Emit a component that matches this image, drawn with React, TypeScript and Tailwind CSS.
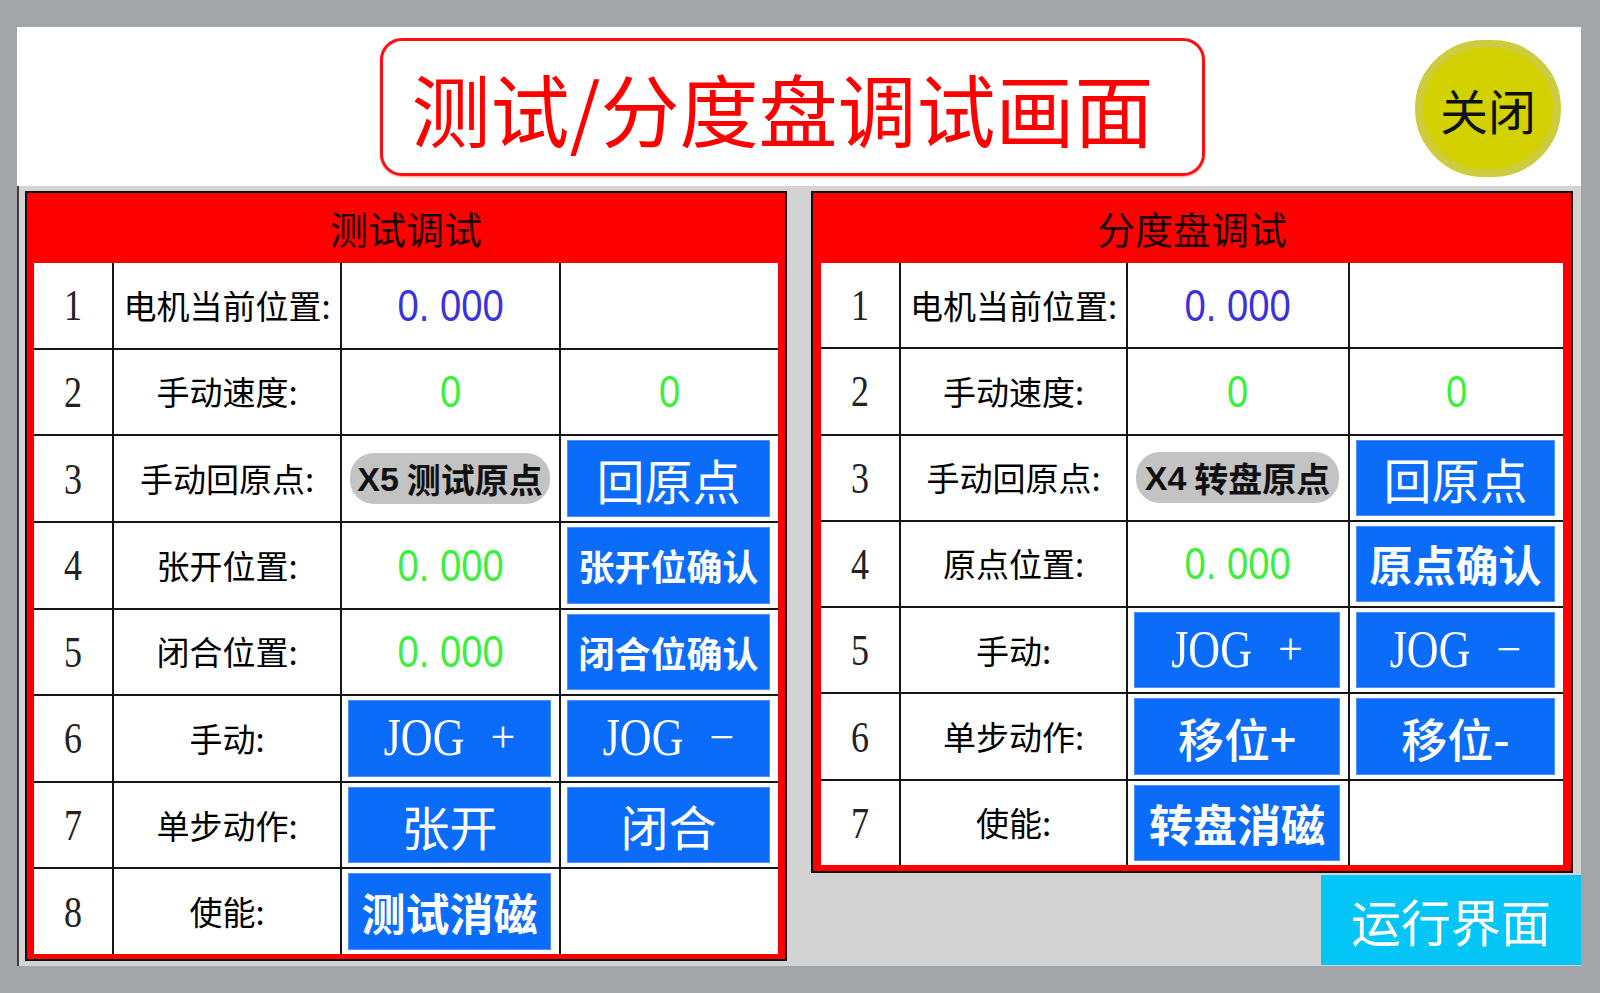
import React from "react";

const CJK = "font-['Noto_Sans_CJK_SC',sans-serif]";

function Num({ n }: { n: string }) {
  return (
    <div className="flex items-center justify-center bg-white">
      <span className="inline-block scale-y-[1.25] font-['Liberation_Serif','Noto_Sans_CJK_SC',serif] text-[36px] leading-none text-[#222]">
        {n}
      </span>
    </div>
  );
}

function Label({ t }: { t: string }) {
  return (
    <div className={`flex items-center justify-center bg-white ${CJK} text-[33px] leading-none text-black`}>
      {t}
    </div>
  );
}

function Val({ v, color }: { v: string; color: string }) {
  return (
    <div className="flex items-center justify-center bg-white">
      <span
        className={`inline-block scale-x-[0.85] whitespace-pre font-['Liberation_Sans',sans-serif] text-[45px] leading-none ${color}`}
      >
        {v}
      </span>
    </div>
  );
}

function Empty() {
  return <div className="bg-white" />;
}

function Btn({ children, cls }: { children: React.ReactNode; cls: string }) {
  return (
    <div className="flex bg-white pl-[6px] pr-[8px] py-[4px]">
      <div
        className={`flex flex-1 items-center justify-center border border-[#4f8fff] bg-[#0a6cf8] leading-none text-white ${CJK} ${cls}`}
      >
        {children}
      </div>
    </div>
  );
}

function Jog({ sign }: { sign: string }) {
  return (
    <Btn cls="text-[44px]">
      <div className="flex items-center gap-[26px] font-['Liberation_Serif',serif]">
        <span className="inline-block scale-y-[1.2]">JOG</span>
        <span className="inline-block">{sign}</span>
      </div>
    </Btn>
  );
}

function Pill({ x, t }: { x: string; t: string }) {
  return (
    <div className="flex items-center bg-white pl-[8px] pr-[9px]">
      <div className="flex h-[51px] flex-1 items-center justify-center rounded-[24px] bg-[#c3c3c3]">
        <span className="font-['Liberation_Sans',sans-serif] text-[34px] font-bold leading-none text-[#111]">{x}</span>
        <span className={`${CJK} ml-[8px] text-[34px] font-bold leading-none text-[#111]`}>{t}</span>
      </div>
    </div>
  );
}

const BLUE = "text-[#3b33d9]";
const GREEN = "text-[#3af03a]";

function Panel({
  title,
  children,
  right,
}: {
  title: string;
  children: React.ReactNode;
  right?: boolean;
}) {
  return (
    <div
      className={
        right
          ? "flex h-[682px] w-[762px] flex-col border-2 border-[#111] bg-[#ff0000] px-[8px] pb-[6px]"
          : "flex h-[770px] w-[762px] flex-col border-2 border-[#111] bg-[#ff0000] px-[7px] pb-[5px]"
      }
    >
      <div className={`flex h-[70px] items-center justify-center ${CJK} text-[38px] leading-none text-[#1c0000]`}>
        {title}
      </div>
      {children}
    </div>
  );
}

export default function App() {
  return (
    <div className="h-[993px] w-[1600px] overflow-hidden bg-[#a3a6a9] pl-[17px] pt-[27px]">
      <div className="flex h-[939px] w-[1564px] flex-col">
        {/* top strip */}
        <div className="flex h-[159px] items-start bg-white pl-[363px] pt-[11px]">
          <div className="flex h-[138px] w-[825px] items-center justify-center rounded-[22px] border-[3px] border-[#ff1010] bg-white shadow-[0_1px_2px_rgba(255,0,0,0.4)]">
            <span className={`${CJK} mr-[20px] text-[79px] leading-none text-[#ff0000]`}>测试/分度盘调试画面</span>
          </div>
          <div className="ml-[210px] mt-[2px] flex h-[137px] w-[146px] items-center justify-center rounded-full border-[8px] border-[#cdcb3e] bg-[#d3d100]">
            <span className={`${CJK} text-[48px] leading-none text-[#111]`}>关闭</span>
          </div>
        </div>

        {/* body */}
        <div className="flex flex-1 border-l-[2px] border-[#3c3c3c] bg-[#d3d3d3] pl-[6px] pt-[5px]">
          <Panel title="测试调试">
            <div className="grid h-[691px] grid-cols-[78px_226px_217px_217px] grid-rows-8 gap-[2px] bg-[#161616]">
              <Num n="1" />
              <Label t="电机当前位置:" />
              <Val v="0. 000" color={BLUE} />
              <Empty />

              <Num n="2" />
              <Label t="手动速度:" />
              <Val v="0" color={GREEN} />
              <Val v="0" color={GREEN} />

              <Num n="3" />
              <Label t="手动回原点:" />
              <Pill x="X5" t="测试原点" />
              <Btn cls="text-[48px]">回原点</Btn>

              <Num n="4" />
              <Label t="张开位置:" />
              <Val v="0. 000" color={GREEN} />
              <Btn cls="text-[36px] font-bold">张开位确认</Btn>

              <Num n="5" />
              <Label t="闭合位置:" />
              <Val v="0. 000" color={GREEN} />
              <Btn cls="text-[36px] font-bold">闭合位确认</Btn>

              <Num n="6" />
              <Label t="手动:" />
              <Jog sign="+" />
              <Jog sign="−" />

              <Num n="7" />
              <Label t="单步动作:" />
              <Btn cls="text-[48px]">张开</Btn>
              <Btn cls="text-[48px]">闭合</Btn>

              <Num n="8" />
              <Label t="使能:" />
              <Btn cls="text-[44px] font-bold">测试消磁</Btn>
              <Empty />
            </div>
          </Panel>

          <div className="ml-[24px] flex w-[771px] flex-col justify-between">
            <Panel title="分度盘调试" right>
              <div className="grid h-[602px] grid-cols-[78px_225px_220px_213px] grid-rows-7 gap-[2px] bg-[#161616]">
                <Num n="1" />
                <Label t="电机当前位置:" />
                <Val v="0. 000" color={BLUE} />
                <Empty />

                <Num n="2" />
                <Label t="手动速度:" />
                <Val v="0" color={GREEN} />
                <Val v="0" color={GREEN} />

                <Num n="3" />
                <Label t="手动回原点:" />
                <Pill x="X4" t="转盘原点" />
                <Btn cls="text-[48px]">回原点</Btn>

                <Num n="4" />
                <Label t="原点位置:" />
                <Val v="0. 000" color={GREEN} />
                <Btn cls="text-[43px] font-bold">原点确认</Btn>

                <Num n="5" />
                <Label t="手动:" />
                <Jog sign="+" />
                <Jog sign="−" />

                <Num n="6" />
                <Label t="单步动作:" />
                <Btn cls="text-[46px] font-medium">移位+</Btn>
                <Btn cls="text-[46px] font-medium">移位-</Btn>

                <Num n="7" />
                <Label t="使能:" />
                <Btn cls="text-[44px] font-bold">转盘消磁</Btn>
                <Empty />
              </div>
            </Panel>
            <div className="mb-[1px] flex h-[90px] w-[260px] items-center justify-center self-end bg-[#04c6f6]">
              <span className={`${CJK} text-[50px] leading-none text-white`}>运行界面</span>
            </div>
          </div>
        </div>
      </div>
    </div>
  );
}
